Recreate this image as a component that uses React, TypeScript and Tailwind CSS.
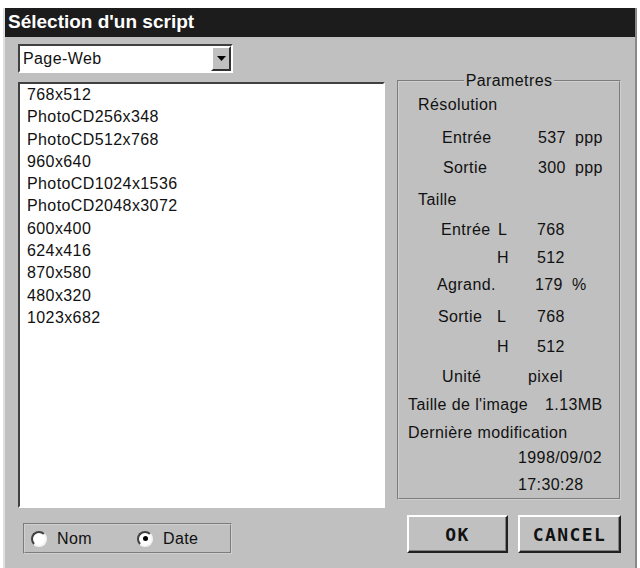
import React from 'react';

const sans = "font-['Liberation_Sans',Arial,sans-serif] text-[16px] tracking-[0.4px] text-[#111]";

const formats = [
  '768x512',
  'PhotoCD256x348',
  'PhotoCD512x768',
  '960x640',
  'PhotoCD1024x1536',
  'PhotoCD2048x3072',
  '600x400',
  '624x416',
  '870x580',
  '480x320',
  '1023x682',
];

const Radio = ({ checked }: { checked?: boolean }) => (
  <span className="flex h-[16px] w-[16px] items-center justify-center rounded-full border-2 border-t-[#404040] border-l-[#404040] border-r-[#f4f4f4] border-b-[#f4f4f4] bg-white">
    {checked && <span className="h-[5px] w-[5px] rounded-full bg-black" />}
  </span>
);

const Button = ({ label, width }: { label: string; width: string }) => (
  <button
    className={`${width} flex h-[38px] items-center justify-center border-2 border-t-white border-l-white border-r-[#202020] border-b-[#202020] bg-[#c0c0c0] shadow-[inset_-1px_-1px_0_#808080] font-['DejaVu_Sans_Mono',monospace] text-[18px] font-bold tracking-[1.4px] text-[#111]`}
  >
    {label}
  </button>
);

const ScriptDialog = () => {
  return (
    <div className="h-[568px] w-[640px] bg-white pt-[8px] pl-[3px]">
      <div className="flex h-[560px] w-[634px] flex-col border-l-2 border-r-2 border-l-[#e0e0e0] border-r-[#888] bg-[#c0c0c0]">
        {/* Title bar */}
        <div className="flex h-[29px] items-center bg-[#1c1c1c] pl-[3px] font-['Liberation_Sans',Arial,sans-serif] text-[19px] font-bold text-white">
          Sélection d'un script
        </div>

        <div className="flex gap-[12px] pl-[13px] pt-[7px]">
          {/* Left column */}
          <div className="flex w-[367px] flex-col">
            <div className="flex h-[29px] w-[215px] items-center justify-between border-2 border-t-[#404040] border-l-[#404040] border-r-white border-b-white bg-white">
              <span className={`${sans} pl-[3px]`}>Page-Web</span>
              <span className="flex h-full w-[20px] items-center justify-center border-2 border-t-white border-l-white border-r-[#303030] border-b-[#303030] bg-[#c0c0c0]">
                <svg width="9" height="5" viewBox="0 0 9 5">
                  <path d="M0 0h9L4.5 5z" fill="#000" />
                </svg>
              </span>
            </div>

            <div className="mt-[9px] h-[426px] border-2 border-t-[#404040] border-l-[#404040] border-r-white border-b-white bg-white pl-[7px]">
              {formats.map((f) => (
                <div key={f} className={`${sans} leading-[22.3px]`}>
                  {f}
                </div>
              ))}
            </div>

            <div className="mt-[15px] ml-[5px] flex h-[31px] w-[209px] items-center border-2 border-[#d0d0d0] [border-style:groove] pl-[6px]">
              <Radio />
              <span className={`${sans} ml-[10px] w-[80px]`}>Nom</span>
              <Radio checked />
              <span className={`${sans} ml-[10px]`}>Date</span>
            </div>
          </div>

          {/* Right column */}
          <div className="flex w-[224px] flex-col">
            <fieldset className={`${sans} m-0 mt-[27px] h-[429px] border-2 border-[#d0d0d0] p-0 [border-style:groove]`}>
              <legend className="mx-auto px-[2px] leading-[20px]">Parametres</legend>

              <div className="mt-[4px] h-5 pl-[19px] leading-5">Résolution</div>
              <div className="mt-[13px] flex h-5 leading-5">
                <span className="w-[139px] pl-[43px]">Entrée</span>
                <span className="w-[37px]">537</span>
                <span>ppp</span>
              </div>
              <div className="mt-[10px] flex h-5 leading-5">
                <span className="w-[139px] pl-[44px]">Sortie</span>
                <span className="w-[37px]">300</span>
                <span>ppp</span>
              </div>
              <div className="mt-[12px] h-5 pl-[19px] leading-5">Taille</div>
              <div className="mt-[10px] flex h-5 leading-5">
                <span className="w-[99px] pl-[42px]">Entrée</span>
                <span className="w-[39px]">L</span>
                <span>768</span>
              </div>
              <div className="mt-[8px] flex h-5 leading-5">
                <span className="w-[138px] pl-[98px]">H</span>
                <span>512</span>
              </div>
              <div className="mt-[7px] flex h-5 leading-5">
                <span className="w-[136px] pl-[38px]">Agrand.</span>
                <span className="w-[37px]">179</span>
                <span>%</span>
              </div>
              <div className="mt-[12px] flex h-5 leading-5">
                <span className="w-[98px] pl-[39px]">Sortie</span>
                <span className="w-[40px]">L</span>
                <span>768</span>
              </div>
              <div className="mt-[10px] flex h-5 leading-5">
                <span className="w-[138px] pl-[98px]">H</span>
                <span>512</span>
              </div>
              <div className="mt-[10px] flex h-5 leading-5">
                <span className="w-[129px] pl-[43px]">Unité</span>
                <span>pixel</span>
              </div>
              <div className="mt-[8px] flex h-5 leading-5">
                <span className="w-[146px] pl-[9px]">Taille de l'image</span>
                <span>1.13MB</span>
              </div>
              <div className="mt-[8px] h-5 pl-[9px] leading-5">Dernière modification</div>
              <div className="mt-[5px] h-5 pl-[119px] leading-5">1998/09/02</div>
              <div className="mt-[7px] h-5 pl-[119px] leading-5">17:30:28</div>
            </fieldset>

            <div className="mt-[15px] ml-[10px] flex gap-[10px]">
              <Button label="OK" width="w-[101px]" />
              <Button label="CANCEL" width="w-[103px]" />
            </div>
          </div>
        </div>
      </div>
    </div>
  );
};

export default function App() {
  return <ScriptDialog />;
}
